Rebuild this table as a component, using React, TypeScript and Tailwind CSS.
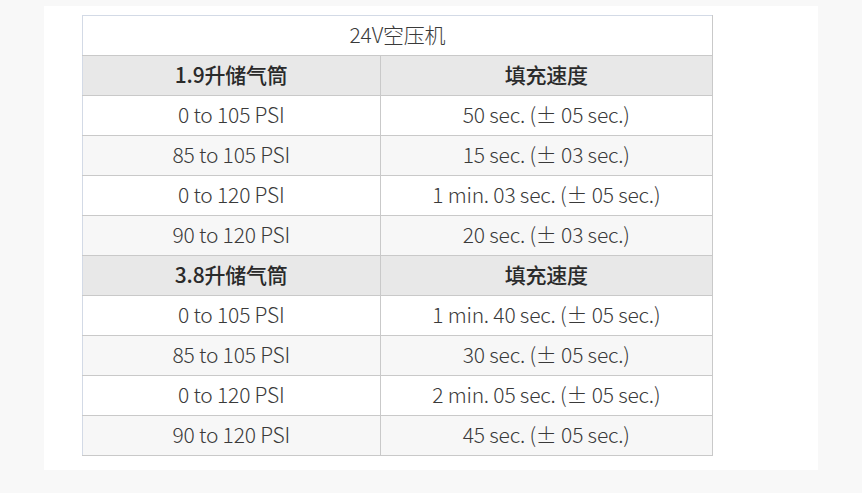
import React from "react";

type Row = { range: string; time: string };

const sections: { tank: string; rows: Row[] }[] = [
  {
    tank: "1.9升储气筒",
    rows: [
      { range: "0 to 105 PSI", time: "50 sec. (± 05 sec.)" },
      { range: "85 to 105 PSI", time: "15 sec. (± 03 sec.)" },
      { range: "0 to 120 PSI", time: "1 min. 03 sec. (± 05 sec.)" },
      { range: "90 to 120 PSI", time: "20 sec. (± 03 sec.)" },
    ],
  },
  {
    tank: "3.8升储气筒",
    rows: [
      { range: "0 to 105 PSI", time: "1 min. 40 sec. (± 05 sec.)" },
      { range: "85 to 105 PSI", time: "30 sec. (± 05 sec.)" },
      { range: "0 to 120 PSI", time: "2 min. 05 sec. (± 05 sec.)" },
      { range: "90 to 120 PSI", time: "45 sec. (± 05 sec.)" },
    ],
  },
];

const cell =
  "h-[40px] p-0 pb-[3px] text-center border border-[#c9c9c9] align-middle";

const App = () => {
  return (
    <div
      className="w-[862px] h-[493px] bg-[#f8f8f8] pt-[6px] pl-[44px] text-[#3a3a3a] font-light"
      style={{
        fontFamily:
          '"Noto Sans CJK SC Light", "Noto Sans CJK SC", "Noto Sans", sans-serif',
      }}
    >
      <div className="w-[774px] h-[464px] bg-white pt-[9px] pl-[38px]">
        <table className="w-[631px] border-collapse text-[21px] leading-none tracking-[-0.2px]">
          <colgroup>
            <col className="w-[298px]" />
            <col className="w-[333px]" />
          </colgroup>
          <tbody>
            <tr>
              <td
                colSpan={2}
                className={`${cell} border-t-[#d3dae6] border-l-[#d3dae6]`}
              >
                24V空压机
              </td>
            </tr>
            {sections.map((s) => (
              <React.Fragment key={s.tank}>
                <tr
                  className="bg-[#e8e8e8] font-medium text-[#2a2a2a]"
                  style={{
                    fontFamily:
                      '"Noto Sans CJK SC Medium", "Noto Sans CJK SC", "Noto Sans", sans-serif',
                  }}
                >
                  <td className={`${cell} border-l-[#d3dae6]`}>{s.tank}</td>
                  <td className={cell}>填充速度</td>
                </tr>
                {s.rows.map((r, i) => (
                  <tr
                    key={i}
                    className={i % 2 === 0 ? "bg-white" : "bg-[#f7f7f7]"}
                  >
                    <td className={`${cell} border-l-[#d3dae6]`}>{r.range}</td>
                    <td className={cell}>{r.time}</td>
                  </tr>
                ))}
              </React.Fragment>
            ))}
          </tbody>
        </table>
      </div>
    </div>
  );
};

export default App;
